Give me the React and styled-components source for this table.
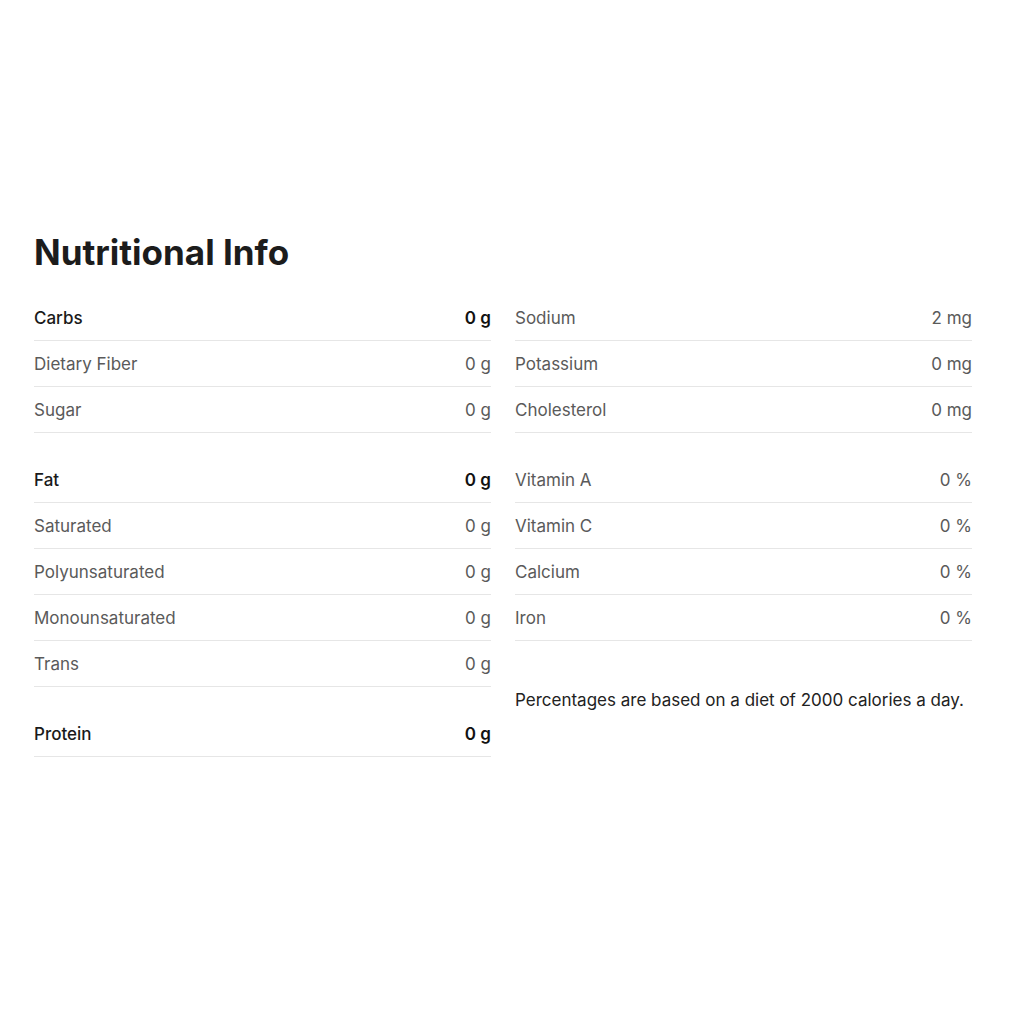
import React from "react";
import styled, { createGlobalStyle } from "styled-components";

const GlobalStyle = createGlobalStyle`
  body {
    margin: 0;
    background: #fff;
    font-family: Inter, "Noto Sans", sans-serif;
  }
`;

const left = [
  [
    { label: "Carbs", value: "0 g", main: true },
    { label: "Dietary Fiber", value: "0 g" },
    { label: "Sugar", value: "0 g" },
  ],
  [
    { label: "Fat", value: "0 g", main: true },
    { label: "Saturated", value: "0 g" },
    { label: "Polyunsaturated", value: "0 g" },
    { label: "Monounsaturated", value: "0 g" },
    { label: "Trans", value: "0 g" },
  ],
  [{ label: "Protein", value: "0 g", main: true }],
];

const right = [
  [
    { label: "Sodium", value: "2 mg" },
    { label: "Potassium", value: "0 mg" },
    { label: "Cholesterol", value: "0 mg" },
  ],
  [
    { label: "Vitamin A", value: "0 %" },
    { label: "Vitamin C", value: "0 %" },
    { label: "Calcium", value: "0 %" },
    { label: "Iron", value: "0 %" },
  ],
];

const renderGroups = (groups) =>
  groups.map((group, gi) => (
    <Group key={gi}>
      {group.map((item) => (
        <Row key={item.label}>
          <Label main={item.main}>{item.label}</Label>
          <Value main={item.main}>{item.value}</Value>
        </Row>
      ))}
    </Group>
  ));

const App = () => {
  return (
    <Page>
      <GlobalStyle />
      <Title>Nutritional Info</Title>
      <Columns>
        <Column>{renderGroups(left)}</Column>
        <Column>
          {renderGroups(right)}
          <Note>Percentages are based on a diet of 2000 calories a day.</Note>
        </Column>
      </Columns>
    </Page>
  );
};

export default App;

const Page = styled.div`
  padding: 231px 52px 0 34px;
`;

const Title = styled.h1`
  margin: 0 0 22px;
  font-size: 35px;
  line-height: 42px;
  font-weight: 700;
  color: #1c1c1c;
  letter-spacing: 0;
`;

const Columns = styled.div`
  display: grid;
  grid-template-columns: 1fr 1fr;
  column-gap: 24px;
`;

const Column = styled.div`
  display: flex;
  flex-direction: column;
  gap: 24px;
`;

const Group = styled.div`
  display: flex;
  flex-direction: column;
`;

const Row = styled.div`
  display: flex;
  justify-content: space-between;
  align-items: center;
  height: 45px;
  border-bottom: 1px solid #e6e6e6;
  font-size: 17px;
`;

const Label = styled.span`
  color: ${(p) => (p.main ? "#1a1a1a" : "#5a5a5a")};
  font-weight: ${(p) => (p.main ? 500 : 400)};
`;

const Value = styled.span`
  color: ${(p) => (p.main ? "#111" : "#5a5a5a")};
  font-weight: ${(p) => (p.main ? 600 : 400)};
`;

const Note = styled.p`
  margin: 25px 0 0;
  font-size: 17px;
  color: #222;
`;
